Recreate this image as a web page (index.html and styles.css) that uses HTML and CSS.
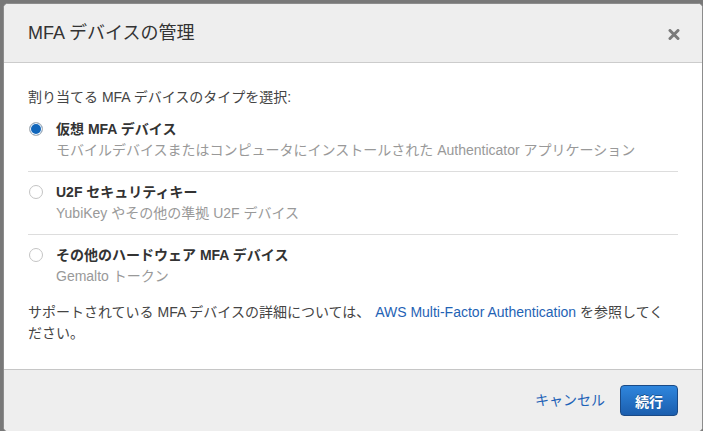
FILE: index.html
```html
<!DOCTYPE html>
<html lang="ja">
<head>
    <meta charset="UTF-8">
    <meta name="viewport" content="width=device-width, initial-scale=1.0">
    <title>MFA デバイスの管理</title>
    <link rel="stylesheet" href="styles.css">
</head>
<body>
    <div class="modal">
        <header class="modal-header">
            <h1>MFA デバイスの管理</h1>
            <button class="close-button" aria-label="閉じる">
                <svg width="12" height="11" viewBox="0 0 12 11">
                    <path d="M2 1.5 L10 9.5 M10 1.5 L2 9.5" stroke="#7a7a7a" stroke-width="3" stroke-linecap="round"/>
                </svg>
            </button>
        </header>

        <section class="modal-body">
            <p class="intro">割り当てる MFA デバイスのタイプを選択:</p>

            <div class="device-list">
                <label class="device-option">
                    <span class="radio checked"></span>
                    <span class="option-text">
                        <span class="option-title">仮想 MFA デバイス</span>
                        <span class="option-desc">モバイルデバイスまたはコンピュータにインストールされた Authenticator アプリケーション</span>
                    </span>
                </label>
                <label class="device-option">
                    <span class="radio"></span>
                    <span class="option-text">
                        <span class="option-title">U2F セキュリティキー</span>
                        <span class="option-desc">YubiKey やその他の準拠 U2F デバイス</span>
                    </span>
                </label>
                <label class="device-option">
                    <span class="radio"></span>
                    <span class="option-text">
                        <span class="option-title">その他のハードウェア MFA デバイス</span>
                        <span class="option-desc">Gemalto トークン</span>
                    </span>
                </label>
            </div>

            <p class="help">サポートされている MFA デバイスの詳細については、 <a href="#">AWS Multi-Factor Authentication</a> を参照してく<br>ださい。</p>
        </section>

        <footer class="modal-footer">
            <a href="#" class="cancel-link">キャンセル</a>
            <button class="continue-button">続行</button>
        </footer>
    </div>
</body>
</html>
```

FILE: styles.css
```css
body {
    margin: 0;
    padding: 0;
    background-color: #787878;
    font-family: "Liberation Sans", Arial, "Noto Sans CJK JP", sans-serif;
    font-size: 14px;
    line-height: 21px;
    color: #444;
    overflow: hidden;
    height: 431px;
}
.modal {
    margin: 3px 0 0 3px;
    width: 698px;
    background: white;
    border: 1px solid #8c8c8c;
    border-radius: 5px;
    overflow: hidden;
}
.modal-header {
    background-color: #eeeeee;
    height: 58px;
    border-bottom: 1px solid #cccccc;
    display: flex;
    align-items: center;
    justify-content: space-between;
    padding: 0 22px 0 24px;
}
.modal-header h1 {
    margin: 0;
    font-size: 18px;
    font-weight: normal;
    color: #333;
    line-height: 24px;
}
.close-button {
    background: none;
    border: none;
    padding: 0;
    cursor: pointer;
    display: flex;
    margin-top: 2px;
}
.modal-body {
    padding: 24px 24px 25px 24px;
    border-bottom: 1px solid #c6c6c6;
}
.intro {
    margin: 0 0 11px 0;
}
.device-option {
    display: flex;
    align-items: flex-start;
    gap: 13px;
    padding: 10px 0;
    border-bottom: 1px solid #dddddd;
    cursor: pointer;
}
.device-option:first-child {
    padding-top: 0;
}
.device-option:last-child {
    border-bottom: none;
    padding-bottom: 0;
}
.radio {
    width: 12px;
    height: 12px;
    border: 1px solid #c4c4c4;
    border-radius: 50%;
    background: white;
    margin: 3px 0 0 1px;
    flex-shrink: 0;
}
.radio.checked {
    border-color: #b9b9b9;
    background: #1166bb;
    box-shadow: inset 0 0 0 1px white;
}
.option-text {
    display: flex;
    flex-direction: column;
}
.option-title {
    font-weight: bold;
    color: #333;
}
.option-desc {
    color: #999;
}
.help {
    margin: 15px 0 0 0;
    color: #444;
}
.help a {
    color: #1f63b5;
    text-decoration: none;
    margin-left: 1px;
}
.modal-footer {
    background-color: #eeeeee;
    height: 46px;
    display: flex;
    justify-content: flex-end;
    align-items: flex-start;
    gap: 15px;
    padding: 15px 24px 0 24px;
}
.cancel-link {
    color: #1d62b7;
    text-decoration: none;
    line-height: 31px;
    font-size: 14px;
}
.continue-button {
    width: 58px;
    height: 31px;
    background: linear-gradient(#2f86dd, #1b5eae);
    border: 1px solid #1a4a86;
    border-radius: 4px;
    color: white;
    font-family: "Liberation Sans", Arial, "Noto Sans CJK JP", sans-serif;
    font-size: 14px;
    font-weight: bold;
    text-shadow: 0 -1px 0 rgba(0,0,0,0.3);
    cursor: pointer;
    padding: 0;
}
```
